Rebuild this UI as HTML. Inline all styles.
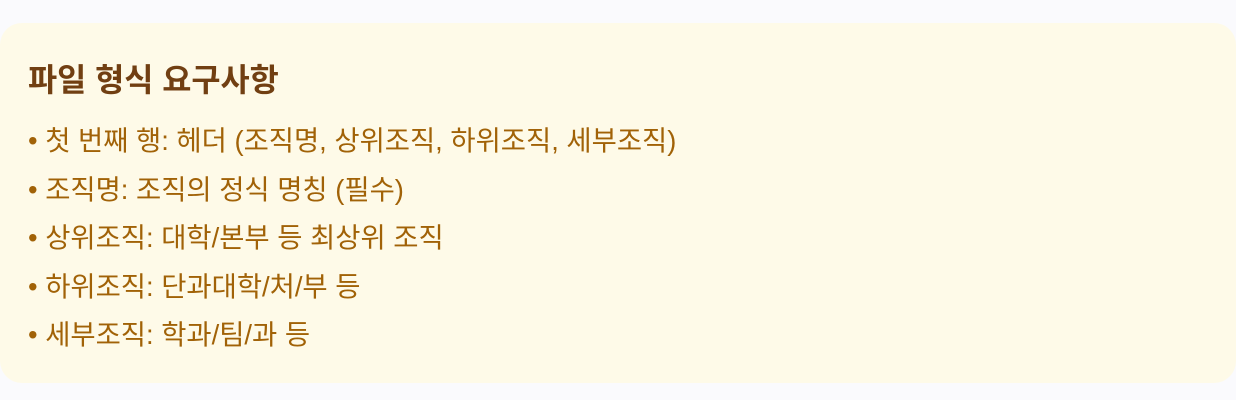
<html><head><style>
body{margin:0;width:1236px;height:400px;background:#fafafd;font-family:"Liberation Sans","Noto Sans CJK KR",sans-serif;overflow:hidden;position:relative}
.card{position:absolute;left:0;top:23px;width:1236px;height:360px;background:#fefae8;border-radius:22px}
h3{position:absolute;left:28px;top:60px;margin:0;font-size:31.7px;font-weight:700;color:#713f12;line-height:40px;white-space:nowrap}
ul{position:absolute;left:28px;top:117px;margin:0;padding:0;list-style:none;color:#a16207;font-size:27.4px;line-height:48.5px;white-space:nowrap}
</style></head><body><div class="card"></div>
<h3>파일 형식 요구사항</h3>
<ul><li>• 첫 번째 행: 헤더 (조직명, 상위조직, 하위조직, 세부조직)</li><li>• 조직명: 조직의 정식 명칭 (필수)</li><li>• 상위조직: 대학/본부 등 최상위 조직</li><li>• 하위조직: 단과대학/처/부 등</li><li>• 세부조직: 학과/팀/과 등</li></ul>
</body></html>
